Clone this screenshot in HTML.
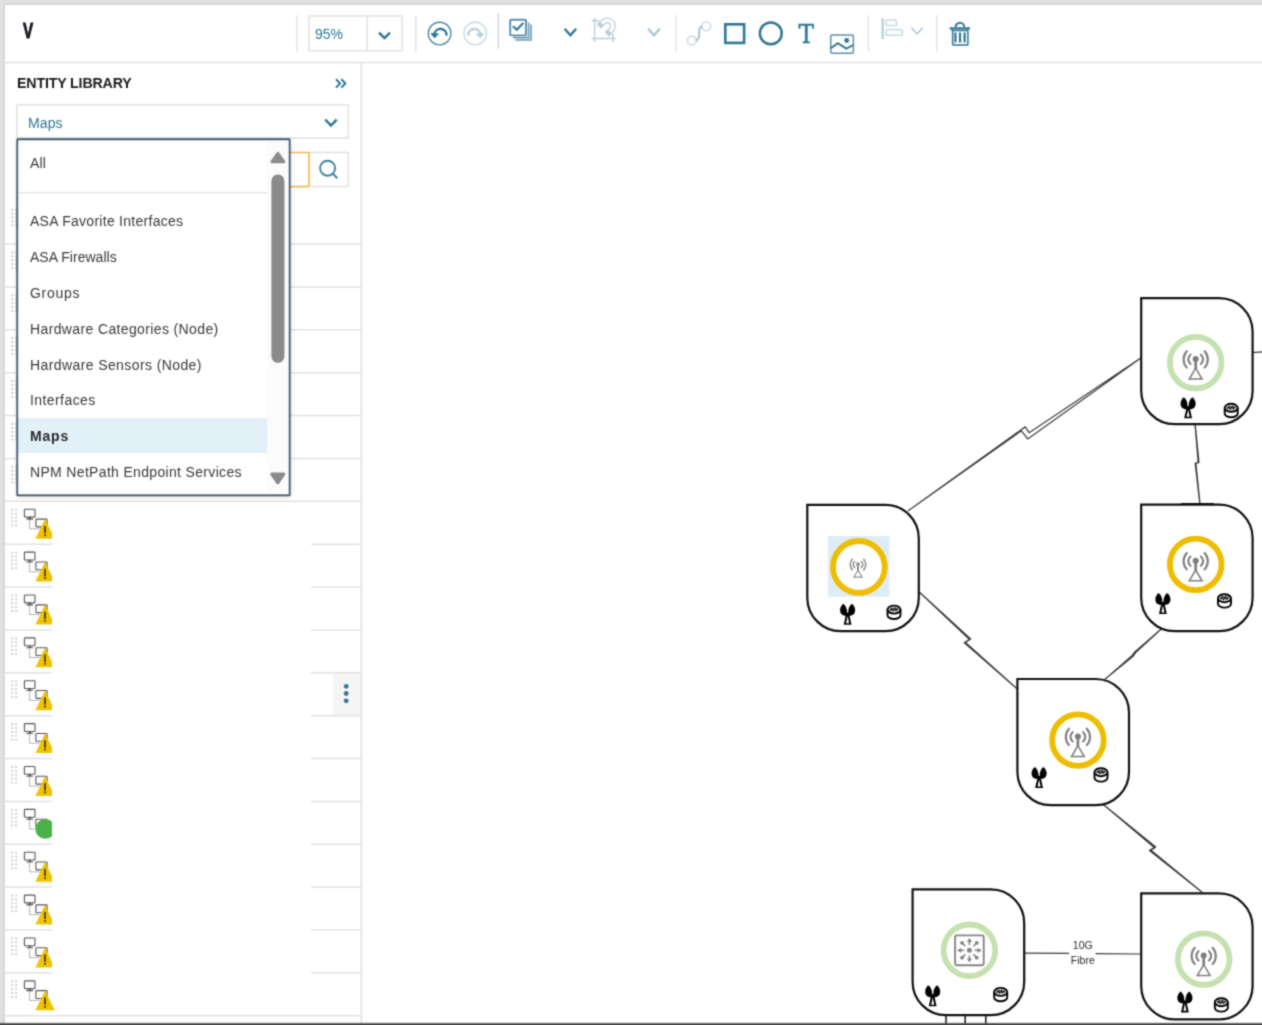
<!DOCTYPE html>
<html lang="en"><head><meta charset="utf-8"><title>Map editor</title>
<style>
*{box-sizing:border-box;margin:0;padding:0}
html,body{width:1262px;height:1025px;overflow:hidden;background:#fff}
body{filter:url(#soft);font-family:"Liberation Sans",sans-serif;font-size:14px;color:#333;position:relative}
.abs{position:absolute}
#frame-top{left:0;top:0;width:1262px;height:5px;background:#dfe0e0}
#frame-top i{position:absolute;left:4px;right:0;top:3px;height:1.5px;background:#d7d8d9}
#frame-left{left:0;top:0;width:5px;height:1025px;background:#dfe0e0}
#frame-left i{position:absolute;top:4px;bottom:0;left:2.5px;width:2px;background:#d7d8d9}
#frame-bottom{left:0;top:1022px;width:1262px;height:3px;background:linear-gradient(to bottom,rgba(80,80,80,0) 0%,rgba(80,80,80,.35) 35%,#4a4a4a 58%,#3c3c3c 100%)}
#toolbar{left:5px;top:5px;width:1257px;height:57px;background:#fff}
#title{left:22.5px;top:18.7px;font-weight:bold;font-size:22.4px;line-height:24px;color:#15151c;-webkit-text-stroke:.9px #15151c;transform:scaleX(.68);transform-origin:0 0}
#zoomval{left:315px;top:24.8px;font-size:14px;line-height:19px;color:#2f7796}
#panel{left:5px;top:63px;width:356px;height:961px;background:#fff}
#ptitle{left:17px;top:74px;font-weight:bold;font-size:14.2px;line-height:18px;color:#1c1c1c;letter-spacing:-.15px}
#selval{left:28px;top:113.6px;font-size:14px;line-height:19px;color:#2f7796;letter-spacing:.1px}
#mask{left:52px;top:503px;width:258.5px;height:500px;background:#fff}
#dd{left:18px;top:139.5px;width:271px;height:354.6px;background:#fff;box-shadow:0 1px 5px 1.5px rgba(0,0,0,.2)}
#dd .it{position:absolute;left:0;width:249px;height:35.5px;padding-left:12px;line-height:35.5px;font-size:14px;color:#3a3a3a;white-space:nowrap}
#dd .sel{background:#e2f0f7;font-weight:bold;color:#2a2a2a;height:35.2px;line-height:36px}
#dd .track{position:absolute;left:249px;top:0;width:22px;height:352px;background:#fbfbfb}

#menu{left:333px;top:673px;width:28px;height:43px;background:#f5f5f5}
</style></head>
<body>
<svg width="0" height="0" style="position:absolute"><filter id="soft" x="0" y="0" width="100%" height="100%" color-interpolation-filters="sRGB"><feConvolveMatrix order="3" kernelMatrix="0.035 0.115 0.035 0.115 0.4 0.115 0.035 0.115 0.035" divisor="1" edgeMode="duplicate" preserveAlpha="true"/></filter></svg>
<div id="toolbar" class="abs"></div>
<div id="title" class="abs">V</div>

<div id="zoomval" class="abs">95%</div>
<div id="panel" class="abs"></div>
<div id="ptitle" class="abs">ENTITY LIBRARY</div>
<div id="selval" class="abs">Maps</div>
<div id="menu" class="abs"></div>
<svg class="abs" style="left:0;top:0" width="1262" height="1025" viewBox="0 0 1262 1025"><g id="lines" fill="none"><path d="M5 62.6 H1262" stroke="#e1e1e1" stroke-width="1.5"/><path d="M361.4 63 V1024" stroke="#e1e1e1" stroke-width="1.6"/><path d="M297 15.2 V51.8" stroke="#e4e4e4" stroke-width="1.5"/><path d="M415.8 15.2 V51.8" stroke="#e4e4e4" stroke-width="1.5"/><path d="M498.4 13 V48.8" stroke="#d6d6d6" stroke-width="1.5"/><path d="M676 15.2 V51.8" stroke="#e4e4e4" stroke-width="1.5"/><path d="M868.5 15.2 V51.8" stroke="#e4e4e4" stroke-width="1.5"/><path d="M936.7 15.2 V51.8" stroke="#e4e4e4" stroke-width="1.5"/><rect x="309" y="16.1" width="93.2" height="34.7" rx=".8" fill="none" stroke="#e1e1e1" stroke-width="1.5"/><path d="M367.2 16.1 V50.8" stroke="#e1e1e1" stroke-width="1.5"/><rect x="16.9" y="104.8" width="331.5" height="33.3" rx=".8" fill="none" stroke="#e1e1e1" stroke-width="1.5"/><rect x="309" y="152.5" width="39.4" height="34.1" rx="1" fill="none" stroke="#e1e1e1" stroke-width="1.5"/><rect x="19.5" y="152.5" width="289.5" height="34.1" rx="1" fill="#fff" stroke="#f5b842" stroke-width="1.6"/><path d="M5 244.07 H361" stroke="#e2e2e2" stroke-width="1.5"/><path d="M5 286.94 H361" stroke="#e2e2e2" stroke-width="1.5"/><path d="M5 329.81 H361" stroke="#e2e2e2" stroke-width="1.5"/><path d="M5 372.68 H361" stroke="#e2e2e2" stroke-width="1.5"/><path d="M5 415.55 H361" stroke="#e2e2e2" stroke-width="1.5"/><path d="M5 458.42 H361" stroke="#e2e2e2" stroke-width="1.5"/><path d="M5 501.29 H361" stroke="#e2e2e2" stroke-width="1.5"/><path d="M5 544.16 H361" stroke="#e2e2e2" stroke-width="1.5"/><path d="M5 587.03 H361" stroke="#e2e2e2" stroke-width="1.5"/><path d="M5 629.90 H361" stroke="#e2e2e2" stroke-width="1.5"/><path d="M5 672.77 H361" stroke="#e2e2e2" stroke-width="1.5"/><path d="M5 715.64 H361" stroke="#e2e2e2" stroke-width="1.5"/><path d="M5 758.51 H361" stroke="#e2e2e2" stroke-width="1.5"/><path d="M5 801.38 H361" stroke="#e2e2e2" stroke-width="1.5"/><path d="M5 844.25 H361" stroke="#e2e2e2" stroke-width="1.5"/><path d="M5 887.12 H361" stroke="#e2e2e2" stroke-width="1.5"/><path d="M5 929.99 H361" stroke="#e2e2e2" stroke-width="1.5"/><path d="M5 972.86 H361" stroke="#e2e2e2" stroke-width="1.5"/><path d="M5 1015.73 H361" stroke="#e2e2e2" stroke-width="1.5"/></g></svg>
<svg class="abs" style="left:0;top:0" width="1262" height="1025" viewBox="0 0 1262 1025">
<g id="rowicons"><g transform="translate(0 208.60)"><rect x="11.3" y="0.2" width="1.7" height="1.7" fill="#c2c2c2"/><rect x="15.2" y="0.2" width="1.7" height="1.7" fill="#c2c2c2"/><rect x="11.3" y="4.1" width="1.7" height="1.7" fill="#c2c2c2"/><rect x="15.2" y="4.1" width="1.7" height="1.7" fill="#c2c2c2"/><rect x="11.3" y="8.0" width="1.7" height="1.7" fill="#c2c2c2"/><rect x="15.2" y="8.0" width="1.7" height="1.7" fill="#c2c2c2"/><rect x="11.3" y="11.9" width="1.7" height="1.7" fill="#c2c2c2"/><rect x="15.2" y="11.9" width="1.7" height="1.7" fill="#c2c2c2"/><rect x="11.3" y="15.8" width="1.7" height="1.7" fill="#c2c2c2"/><rect x="15.2" y="15.8" width="1.7" height="1.7" fill="#c2c2c2"/><g fill="none" stroke="#555" stroke-width="1.1"><rect x="24.4" y="0.6" width="10.6" height="7.8" rx=".8" fill="#fff"/><path d="M26.4 10.4 H33 M28.6 10.2 L29.7 8.6 L30.8 10.2"/><path d="M29.6 12 V20.2 H40" stroke-dasharray="1.1 1.2" stroke-width="1" stroke="#666" stroke-linejoin="miter"/><rect x="35.9" y="10.4" width="11.2" height="7.8" rx=".8" fill="#fff"/></g></g><g transform="translate(0 251.47)"><rect x="11.3" y="0.2" width="1.7" height="1.7" fill="#c2c2c2"/><rect x="15.2" y="0.2" width="1.7" height="1.7" fill="#c2c2c2"/><rect x="11.3" y="4.1" width="1.7" height="1.7" fill="#c2c2c2"/><rect x="15.2" y="4.1" width="1.7" height="1.7" fill="#c2c2c2"/><rect x="11.3" y="8.0" width="1.7" height="1.7" fill="#c2c2c2"/><rect x="15.2" y="8.0" width="1.7" height="1.7" fill="#c2c2c2"/><rect x="11.3" y="11.9" width="1.7" height="1.7" fill="#c2c2c2"/><rect x="15.2" y="11.9" width="1.7" height="1.7" fill="#c2c2c2"/><rect x="11.3" y="15.8" width="1.7" height="1.7" fill="#c2c2c2"/><rect x="15.2" y="15.8" width="1.7" height="1.7" fill="#c2c2c2"/><g fill="none" stroke="#555" stroke-width="1.1"><rect x="24.4" y="0.6" width="10.6" height="7.8" rx=".8" fill="#fff"/><path d="M26.4 10.4 H33 M28.6 10.2 L29.7 8.6 L30.8 10.2"/><path d="M29.6 12 V20.2 H40" stroke-dasharray="1.1 1.2" stroke-width="1" stroke="#666" stroke-linejoin="miter"/><rect x="35.9" y="10.4" width="11.2" height="7.8" rx=".8" fill="#fff"/></g></g><g transform="translate(0 294.34)"><rect x="11.3" y="0.2" width="1.7" height="1.7" fill="#c2c2c2"/><rect x="15.2" y="0.2" width="1.7" height="1.7" fill="#c2c2c2"/><rect x="11.3" y="4.1" width="1.7" height="1.7" fill="#c2c2c2"/><rect x="15.2" y="4.1" width="1.7" height="1.7" fill="#c2c2c2"/><rect x="11.3" y="8.0" width="1.7" height="1.7" fill="#c2c2c2"/><rect x="15.2" y="8.0" width="1.7" height="1.7" fill="#c2c2c2"/><rect x="11.3" y="11.9" width="1.7" height="1.7" fill="#c2c2c2"/><rect x="15.2" y="11.9" width="1.7" height="1.7" fill="#c2c2c2"/><rect x="11.3" y="15.8" width="1.7" height="1.7" fill="#c2c2c2"/><rect x="15.2" y="15.8" width="1.7" height="1.7" fill="#c2c2c2"/><g fill="none" stroke="#555" stroke-width="1.1"><rect x="24.4" y="0.6" width="10.6" height="7.8" rx=".8" fill="#fff"/><path d="M26.4 10.4 H33 M28.6 10.2 L29.7 8.6 L30.8 10.2"/><path d="M29.6 12 V20.2 H40" stroke-dasharray="1.1 1.2" stroke-width="1" stroke="#666" stroke-linejoin="miter"/><rect x="35.9" y="10.4" width="11.2" height="7.8" rx=".8" fill="#fff"/></g></g><g transform="translate(0 337.21)"><rect x="11.3" y="0.2" width="1.7" height="1.7" fill="#c2c2c2"/><rect x="15.2" y="0.2" width="1.7" height="1.7" fill="#c2c2c2"/><rect x="11.3" y="4.1" width="1.7" height="1.7" fill="#c2c2c2"/><rect x="15.2" y="4.1" width="1.7" height="1.7" fill="#c2c2c2"/><rect x="11.3" y="8.0" width="1.7" height="1.7" fill="#c2c2c2"/><rect x="15.2" y="8.0" width="1.7" height="1.7" fill="#c2c2c2"/><rect x="11.3" y="11.9" width="1.7" height="1.7" fill="#c2c2c2"/><rect x="15.2" y="11.9" width="1.7" height="1.7" fill="#c2c2c2"/><rect x="11.3" y="15.8" width="1.7" height="1.7" fill="#c2c2c2"/><rect x="15.2" y="15.8" width="1.7" height="1.7" fill="#c2c2c2"/><g fill="none" stroke="#555" stroke-width="1.1"><rect x="24.4" y="0.6" width="10.6" height="7.8" rx=".8" fill="#fff"/><path d="M26.4 10.4 H33 M28.6 10.2 L29.7 8.6 L30.8 10.2"/><path d="M29.6 12 V20.2 H40" stroke-dasharray="1.1 1.2" stroke-width="1" stroke="#666" stroke-linejoin="miter"/><rect x="35.9" y="10.4" width="11.2" height="7.8" rx=".8" fill="#fff"/></g></g><g transform="translate(0 380.08)"><rect x="11.3" y="0.2" width="1.7" height="1.7" fill="#c2c2c2"/><rect x="15.2" y="0.2" width="1.7" height="1.7" fill="#c2c2c2"/><rect x="11.3" y="4.1" width="1.7" height="1.7" fill="#c2c2c2"/><rect x="15.2" y="4.1" width="1.7" height="1.7" fill="#c2c2c2"/><rect x="11.3" y="8.0" width="1.7" height="1.7" fill="#c2c2c2"/><rect x="15.2" y="8.0" width="1.7" height="1.7" fill="#c2c2c2"/><rect x="11.3" y="11.9" width="1.7" height="1.7" fill="#c2c2c2"/><rect x="15.2" y="11.9" width="1.7" height="1.7" fill="#c2c2c2"/><rect x="11.3" y="15.8" width="1.7" height="1.7" fill="#c2c2c2"/><rect x="15.2" y="15.8" width="1.7" height="1.7" fill="#c2c2c2"/><g fill="none" stroke="#555" stroke-width="1.1"><rect x="24.4" y="0.6" width="10.6" height="7.8" rx=".8" fill="#fff"/><path d="M26.4 10.4 H33 M28.6 10.2 L29.7 8.6 L30.8 10.2"/><path d="M29.6 12 V20.2 H40" stroke-dasharray="1.1 1.2" stroke-width="1" stroke="#666" stroke-linejoin="miter"/><rect x="35.9" y="10.4" width="11.2" height="7.8" rx=".8" fill="#fff"/></g></g><g transform="translate(0 422.95)"><rect x="11.3" y="0.2" width="1.7" height="1.7" fill="#c2c2c2"/><rect x="15.2" y="0.2" width="1.7" height="1.7" fill="#c2c2c2"/><rect x="11.3" y="4.1" width="1.7" height="1.7" fill="#c2c2c2"/><rect x="15.2" y="4.1" width="1.7" height="1.7" fill="#c2c2c2"/><rect x="11.3" y="8.0" width="1.7" height="1.7" fill="#c2c2c2"/><rect x="15.2" y="8.0" width="1.7" height="1.7" fill="#c2c2c2"/><rect x="11.3" y="11.9" width="1.7" height="1.7" fill="#c2c2c2"/><rect x="15.2" y="11.9" width="1.7" height="1.7" fill="#c2c2c2"/><rect x="11.3" y="15.8" width="1.7" height="1.7" fill="#c2c2c2"/><rect x="15.2" y="15.8" width="1.7" height="1.7" fill="#c2c2c2"/><g fill="none" stroke="#555" stroke-width="1.1"><rect x="24.4" y="0.6" width="10.6" height="7.8" rx=".8" fill="#fff"/><path d="M26.4 10.4 H33 M28.6 10.2 L29.7 8.6 L30.8 10.2"/><path d="M29.6 12 V20.2 H40" stroke-dasharray="1.1 1.2" stroke-width="1" stroke="#666" stroke-linejoin="miter"/><rect x="35.9" y="10.4" width="11.2" height="7.8" rx=".8" fill="#fff"/></g></g><g transform="translate(0 465.82)"><rect x="11.3" y="0.2" width="1.7" height="1.7" fill="#c2c2c2"/><rect x="15.2" y="0.2" width="1.7" height="1.7" fill="#c2c2c2"/><rect x="11.3" y="4.1" width="1.7" height="1.7" fill="#c2c2c2"/><rect x="15.2" y="4.1" width="1.7" height="1.7" fill="#c2c2c2"/><rect x="11.3" y="8.0" width="1.7" height="1.7" fill="#c2c2c2"/><rect x="15.2" y="8.0" width="1.7" height="1.7" fill="#c2c2c2"/><rect x="11.3" y="11.9" width="1.7" height="1.7" fill="#c2c2c2"/><rect x="15.2" y="11.9" width="1.7" height="1.7" fill="#c2c2c2"/><rect x="11.3" y="15.8" width="1.7" height="1.7" fill="#c2c2c2"/><rect x="15.2" y="15.8" width="1.7" height="1.7" fill="#c2c2c2"/><g fill="none" stroke="#555" stroke-width="1.1"><rect x="24.4" y="0.6" width="10.6" height="7.8" rx=".8" fill="#fff"/><path d="M26.4 10.4 H33 M28.6 10.2 L29.7 8.6 L30.8 10.2"/><path d="M29.6 12 V20.2 H40" stroke-dasharray="1.1 1.2" stroke-width="1" stroke="#666" stroke-linejoin="miter"/><rect x="35.9" y="10.4" width="11.2" height="7.8" rx=".8" fill="#fff"/></g></g><g transform="translate(0 508.69)"><rect x="11.3" y="0.2" width="1.7" height="1.7" fill="#c2c2c2"/><rect x="15.2" y="0.2" width="1.7" height="1.7" fill="#c2c2c2"/><rect x="11.3" y="4.1" width="1.7" height="1.7" fill="#c2c2c2"/><rect x="15.2" y="4.1" width="1.7" height="1.7" fill="#c2c2c2"/><rect x="11.3" y="8.0" width="1.7" height="1.7" fill="#c2c2c2"/><rect x="15.2" y="8.0" width="1.7" height="1.7" fill="#c2c2c2"/><rect x="11.3" y="11.9" width="1.7" height="1.7" fill="#c2c2c2"/><rect x="15.2" y="11.9" width="1.7" height="1.7" fill="#c2c2c2"/><rect x="11.3" y="15.8" width="1.7" height="1.7" fill="#c2c2c2"/><rect x="15.2" y="15.8" width="1.7" height="1.7" fill="#c2c2c2"/><g fill="none" stroke="#555" stroke-width="1.1"><rect x="24.4" y="0.6" width="10.6" height="7.8" rx=".8" fill="#fff"/><path d="M26.4 10.4 H33 M28.6 10.2 L29.7 8.6 L30.8 10.2"/><path d="M29.6 12 V20.2 H40" stroke-dasharray="1.1 1.2" stroke-width="1" stroke="#666" stroke-linejoin="miter"/><rect x="35.9" y="10.4" width="11.2" height="7.8" rx=".8" fill="#fff"/></g><path d="M45 10.4 L54.8 30 H35.4 Z" fill="#f0c200"/><path d="M45 17.2 V24.6" stroke="#5a4d14" stroke-width="2" fill="none"/><rect x="44" y="25.6" width="2" height="1.8" fill="#5a4d14"/></g><g transform="translate(0 551.56)"><rect x="11.3" y="0.2" width="1.7" height="1.7" fill="#c2c2c2"/><rect x="15.2" y="0.2" width="1.7" height="1.7" fill="#c2c2c2"/><rect x="11.3" y="4.1" width="1.7" height="1.7" fill="#c2c2c2"/><rect x="15.2" y="4.1" width="1.7" height="1.7" fill="#c2c2c2"/><rect x="11.3" y="8.0" width="1.7" height="1.7" fill="#c2c2c2"/><rect x="15.2" y="8.0" width="1.7" height="1.7" fill="#c2c2c2"/><rect x="11.3" y="11.9" width="1.7" height="1.7" fill="#c2c2c2"/><rect x="15.2" y="11.9" width="1.7" height="1.7" fill="#c2c2c2"/><rect x="11.3" y="15.8" width="1.7" height="1.7" fill="#c2c2c2"/><rect x="15.2" y="15.8" width="1.7" height="1.7" fill="#c2c2c2"/><g fill="none" stroke="#555" stroke-width="1.1"><rect x="24.4" y="0.6" width="10.6" height="7.8" rx=".8" fill="#fff"/><path d="M26.4 10.4 H33 M28.6 10.2 L29.7 8.6 L30.8 10.2"/><path d="M29.6 12 V20.2 H40" stroke-dasharray="1.1 1.2" stroke-width="1" stroke="#666" stroke-linejoin="miter"/><rect x="35.9" y="10.4" width="11.2" height="7.8" rx=".8" fill="#fff"/></g><path d="M45 10.4 L54.8 30 H35.4 Z" fill="#f0c200"/><path d="M45 17.2 V24.6" stroke="#5a4d14" stroke-width="2" fill="none"/><rect x="44" y="25.6" width="2" height="1.8" fill="#5a4d14"/></g><g transform="translate(0 594.43)"><rect x="11.3" y="0.2" width="1.7" height="1.7" fill="#c2c2c2"/><rect x="15.2" y="0.2" width="1.7" height="1.7" fill="#c2c2c2"/><rect x="11.3" y="4.1" width="1.7" height="1.7" fill="#c2c2c2"/><rect x="15.2" y="4.1" width="1.7" height="1.7" fill="#c2c2c2"/><rect x="11.3" y="8.0" width="1.7" height="1.7" fill="#c2c2c2"/><rect x="15.2" y="8.0" width="1.7" height="1.7" fill="#c2c2c2"/><rect x="11.3" y="11.9" width="1.7" height="1.7" fill="#c2c2c2"/><rect x="15.2" y="11.9" width="1.7" height="1.7" fill="#c2c2c2"/><rect x="11.3" y="15.8" width="1.7" height="1.7" fill="#c2c2c2"/><rect x="15.2" y="15.8" width="1.7" height="1.7" fill="#c2c2c2"/><g fill="none" stroke="#555" stroke-width="1.1"><rect x="24.4" y="0.6" width="10.6" height="7.8" rx=".8" fill="#fff"/><path d="M26.4 10.4 H33 M28.6 10.2 L29.7 8.6 L30.8 10.2"/><path d="M29.6 12 V20.2 H40" stroke-dasharray="1.1 1.2" stroke-width="1" stroke="#666" stroke-linejoin="miter"/><rect x="35.9" y="10.4" width="11.2" height="7.8" rx=".8" fill="#fff"/></g><path d="M45 10.4 L54.8 30 H35.4 Z" fill="#f0c200"/><path d="M45 17.2 V24.6" stroke="#5a4d14" stroke-width="2" fill="none"/><rect x="44" y="25.6" width="2" height="1.8" fill="#5a4d14"/></g><g transform="translate(0 637.30)"><rect x="11.3" y="0.2" width="1.7" height="1.7" fill="#c2c2c2"/><rect x="15.2" y="0.2" width="1.7" height="1.7" fill="#c2c2c2"/><rect x="11.3" y="4.1" width="1.7" height="1.7" fill="#c2c2c2"/><rect x="15.2" y="4.1" width="1.7" height="1.7" fill="#c2c2c2"/><rect x="11.3" y="8.0" width="1.7" height="1.7" fill="#c2c2c2"/><rect x="15.2" y="8.0" width="1.7" height="1.7" fill="#c2c2c2"/><rect x="11.3" y="11.9" width="1.7" height="1.7" fill="#c2c2c2"/><rect x="15.2" y="11.9" width="1.7" height="1.7" fill="#c2c2c2"/><rect x="11.3" y="15.8" width="1.7" height="1.7" fill="#c2c2c2"/><rect x="15.2" y="15.8" width="1.7" height="1.7" fill="#c2c2c2"/><g fill="none" stroke="#555" stroke-width="1.1"><rect x="24.4" y="0.6" width="10.6" height="7.8" rx=".8" fill="#fff"/><path d="M26.4 10.4 H33 M28.6 10.2 L29.7 8.6 L30.8 10.2"/><path d="M29.6 12 V20.2 H40" stroke-dasharray="1.1 1.2" stroke-width="1" stroke="#666" stroke-linejoin="miter"/><rect x="35.9" y="10.4" width="11.2" height="7.8" rx=".8" fill="#fff"/></g><path d="M45 10.4 L54.8 30 H35.4 Z" fill="#f0c200"/><path d="M45 17.2 V24.6" stroke="#5a4d14" stroke-width="2" fill="none"/><rect x="44" y="25.6" width="2" height="1.8" fill="#5a4d14"/></g><g transform="translate(0 680.17)"><rect x="11.3" y="0.2" width="1.7" height="1.7" fill="#c2c2c2"/><rect x="15.2" y="0.2" width="1.7" height="1.7" fill="#c2c2c2"/><rect x="11.3" y="4.1" width="1.7" height="1.7" fill="#c2c2c2"/><rect x="15.2" y="4.1" width="1.7" height="1.7" fill="#c2c2c2"/><rect x="11.3" y="8.0" width="1.7" height="1.7" fill="#c2c2c2"/><rect x="15.2" y="8.0" width="1.7" height="1.7" fill="#c2c2c2"/><rect x="11.3" y="11.9" width="1.7" height="1.7" fill="#c2c2c2"/><rect x="15.2" y="11.9" width="1.7" height="1.7" fill="#c2c2c2"/><rect x="11.3" y="15.8" width="1.7" height="1.7" fill="#c2c2c2"/><rect x="15.2" y="15.8" width="1.7" height="1.7" fill="#c2c2c2"/><g fill="none" stroke="#555" stroke-width="1.1"><rect x="24.4" y="0.6" width="10.6" height="7.8" rx=".8" fill="#fff"/><path d="M26.4 10.4 H33 M28.6 10.2 L29.7 8.6 L30.8 10.2"/><path d="M29.6 12 V20.2 H40" stroke-dasharray="1.1 1.2" stroke-width="1" stroke="#666" stroke-linejoin="miter"/><rect x="35.9" y="10.4" width="11.2" height="7.8" rx=".8" fill="#fff"/></g><path d="M45 10.4 L54.8 30 H35.4 Z" fill="#f0c200"/><path d="M45 17.2 V24.6" stroke="#5a4d14" stroke-width="2" fill="none"/><rect x="44" y="25.6" width="2" height="1.8" fill="#5a4d14"/></g><g transform="translate(0 723.04)"><rect x="11.3" y="0.2" width="1.7" height="1.7" fill="#c2c2c2"/><rect x="15.2" y="0.2" width="1.7" height="1.7" fill="#c2c2c2"/><rect x="11.3" y="4.1" width="1.7" height="1.7" fill="#c2c2c2"/><rect x="15.2" y="4.1" width="1.7" height="1.7" fill="#c2c2c2"/><rect x="11.3" y="8.0" width="1.7" height="1.7" fill="#c2c2c2"/><rect x="15.2" y="8.0" width="1.7" height="1.7" fill="#c2c2c2"/><rect x="11.3" y="11.9" width="1.7" height="1.7" fill="#c2c2c2"/><rect x="15.2" y="11.9" width="1.7" height="1.7" fill="#c2c2c2"/><rect x="11.3" y="15.8" width="1.7" height="1.7" fill="#c2c2c2"/><rect x="15.2" y="15.8" width="1.7" height="1.7" fill="#c2c2c2"/><g fill="none" stroke="#555" stroke-width="1.1"><rect x="24.4" y="0.6" width="10.6" height="7.8" rx=".8" fill="#fff"/><path d="M26.4 10.4 H33 M28.6 10.2 L29.7 8.6 L30.8 10.2"/><path d="M29.6 12 V20.2 H40" stroke-dasharray="1.1 1.2" stroke-width="1" stroke="#666" stroke-linejoin="miter"/><rect x="35.9" y="10.4" width="11.2" height="7.8" rx=".8" fill="#fff"/></g><path d="M45 10.4 L54.8 30 H35.4 Z" fill="#f0c200"/><path d="M45 17.2 V24.6" stroke="#5a4d14" stroke-width="2" fill="none"/><rect x="44" y="25.6" width="2" height="1.8" fill="#5a4d14"/></g><g transform="translate(0 765.91)"><rect x="11.3" y="0.2" width="1.7" height="1.7" fill="#c2c2c2"/><rect x="15.2" y="0.2" width="1.7" height="1.7" fill="#c2c2c2"/><rect x="11.3" y="4.1" width="1.7" height="1.7" fill="#c2c2c2"/><rect x="15.2" y="4.1" width="1.7" height="1.7" fill="#c2c2c2"/><rect x="11.3" y="8.0" width="1.7" height="1.7" fill="#c2c2c2"/><rect x="15.2" y="8.0" width="1.7" height="1.7" fill="#c2c2c2"/><rect x="11.3" y="11.9" width="1.7" height="1.7" fill="#c2c2c2"/><rect x="15.2" y="11.9" width="1.7" height="1.7" fill="#c2c2c2"/><rect x="11.3" y="15.8" width="1.7" height="1.7" fill="#c2c2c2"/><rect x="15.2" y="15.8" width="1.7" height="1.7" fill="#c2c2c2"/><g fill="none" stroke="#555" stroke-width="1.1"><rect x="24.4" y="0.6" width="10.6" height="7.8" rx=".8" fill="#fff"/><path d="M26.4 10.4 H33 M28.6 10.2 L29.7 8.6 L30.8 10.2"/><path d="M29.6 12 V20.2 H40" stroke-dasharray="1.1 1.2" stroke-width="1" stroke="#666" stroke-linejoin="miter"/><rect x="35.9" y="10.4" width="11.2" height="7.8" rx=".8" fill="#fff"/></g><path d="M45 10.4 L54.8 30 H35.4 Z" fill="#f0c200"/><path d="M45 17.2 V24.6" stroke="#5a4d14" stroke-width="2" fill="none"/><rect x="44" y="25.6" width="2" height="1.8" fill="#5a4d14"/></g><g transform="translate(0 808.78)"><rect x="11.3" y="0.2" width="1.7" height="1.7" fill="#c2c2c2"/><rect x="15.2" y="0.2" width="1.7" height="1.7" fill="#c2c2c2"/><rect x="11.3" y="4.1" width="1.7" height="1.7" fill="#c2c2c2"/><rect x="15.2" y="4.1" width="1.7" height="1.7" fill="#c2c2c2"/><rect x="11.3" y="8.0" width="1.7" height="1.7" fill="#c2c2c2"/><rect x="15.2" y="8.0" width="1.7" height="1.7" fill="#c2c2c2"/><rect x="11.3" y="11.9" width="1.7" height="1.7" fill="#c2c2c2"/><rect x="15.2" y="11.9" width="1.7" height="1.7" fill="#c2c2c2"/><rect x="11.3" y="15.8" width="1.7" height="1.7" fill="#c2c2c2"/><rect x="15.2" y="15.8" width="1.7" height="1.7" fill="#c2c2c2"/><g fill="none" stroke="#555" stroke-width="1.1"><rect x="24.4" y="0.6" width="10.6" height="7.8" rx=".8" fill="#fff"/><path d="M26.4 10.4 H33 M28.6 10.2 L29.7 8.6 L30.8 10.2"/><path d="M29.6 12 V20.2 H40" stroke-dasharray="1.1 1.2" stroke-width="1" stroke="#666" stroke-linejoin="miter"/><rect x="35.9" y="10.4" width="11.2" height="7.8" rx=".8" fill="#fff"/></g><circle cx="45.3" cy="20.1" r="9.9" fill="#4bb048"/></g><g transform="translate(0 851.65)"><rect x="11.3" y="0.2" width="1.7" height="1.7" fill="#c2c2c2"/><rect x="15.2" y="0.2" width="1.7" height="1.7" fill="#c2c2c2"/><rect x="11.3" y="4.1" width="1.7" height="1.7" fill="#c2c2c2"/><rect x="15.2" y="4.1" width="1.7" height="1.7" fill="#c2c2c2"/><rect x="11.3" y="8.0" width="1.7" height="1.7" fill="#c2c2c2"/><rect x="15.2" y="8.0" width="1.7" height="1.7" fill="#c2c2c2"/><rect x="11.3" y="11.9" width="1.7" height="1.7" fill="#c2c2c2"/><rect x="15.2" y="11.9" width="1.7" height="1.7" fill="#c2c2c2"/><rect x="11.3" y="15.8" width="1.7" height="1.7" fill="#c2c2c2"/><rect x="15.2" y="15.8" width="1.7" height="1.7" fill="#c2c2c2"/><g fill="none" stroke="#555" stroke-width="1.1"><rect x="24.4" y="0.6" width="10.6" height="7.8" rx=".8" fill="#fff"/><path d="M26.4 10.4 H33 M28.6 10.2 L29.7 8.6 L30.8 10.2"/><path d="M29.6 12 V20.2 H40" stroke-dasharray="1.1 1.2" stroke-width="1" stroke="#666" stroke-linejoin="miter"/><rect x="35.9" y="10.4" width="11.2" height="7.8" rx=".8" fill="#fff"/></g><path d="M45 10.4 L54.8 30 H35.4 Z" fill="#f0c200"/><path d="M45 17.2 V24.6" stroke="#5a4d14" stroke-width="2" fill="none"/><rect x="44" y="25.6" width="2" height="1.8" fill="#5a4d14"/></g><g transform="translate(0 894.52)"><rect x="11.3" y="0.2" width="1.7" height="1.7" fill="#c2c2c2"/><rect x="15.2" y="0.2" width="1.7" height="1.7" fill="#c2c2c2"/><rect x="11.3" y="4.1" width="1.7" height="1.7" fill="#c2c2c2"/><rect x="15.2" y="4.1" width="1.7" height="1.7" fill="#c2c2c2"/><rect x="11.3" y="8.0" width="1.7" height="1.7" fill="#c2c2c2"/><rect x="15.2" y="8.0" width="1.7" height="1.7" fill="#c2c2c2"/><rect x="11.3" y="11.9" width="1.7" height="1.7" fill="#c2c2c2"/><rect x="15.2" y="11.9" width="1.7" height="1.7" fill="#c2c2c2"/><rect x="11.3" y="15.8" width="1.7" height="1.7" fill="#c2c2c2"/><rect x="15.2" y="15.8" width="1.7" height="1.7" fill="#c2c2c2"/><g fill="none" stroke="#555" stroke-width="1.1"><rect x="24.4" y="0.6" width="10.6" height="7.8" rx=".8" fill="#fff"/><path d="M26.4 10.4 H33 M28.6 10.2 L29.7 8.6 L30.8 10.2"/><path d="M29.6 12 V20.2 H40" stroke-dasharray="1.1 1.2" stroke-width="1" stroke="#666" stroke-linejoin="miter"/><rect x="35.9" y="10.4" width="11.2" height="7.8" rx=".8" fill="#fff"/></g><path d="M45 10.4 L54.8 30 H35.4 Z" fill="#f0c200"/><path d="M45 17.2 V24.6" stroke="#5a4d14" stroke-width="2" fill="none"/><rect x="44" y="25.6" width="2" height="1.8" fill="#5a4d14"/></g><g transform="translate(0 937.39)"><rect x="11.3" y="0.2" width="1.7" height="1.7" fill="#c2c2c2"/><rect x="15.2" y="0.2" width="1.7" height="1.7" fill="#c2c2c2"/><rect x="11.3" y="4.1" width="1.7" height="1.7" fill="#c2c2c2"/><rect x="15.2" y="4.1" width="1.7" height="1.7" fill="#c2c2c2"/><rect x="11.3" y="8.0" width="1.7" height="1.7" fill="#c2c2c2"/><rect x="15.2" y="8.0" width="1.7" height="1.7" fill="#c2c2c2"/><rect x="11.3" y="11.9" width="1.7" height="1.7" fill="#c2c2c2"/><rect x="15.2" y="11.9" width="1.7" height="1.7" fill="#c2c2c2"/><rect x="11.3" y="15.8" width="1.7" height="1.7" fill="#c2c2c2"/><rect x="15.2" y="15.8" width="1.7" height="1.7" fill="#c2c2c2"/><g fill="none" stroke="#555" stroke-width="1.1"><rect x="24.4" y="0.6" width="10.6" height="7.8" rx=".8" fill="#fff"/><path d="M26.4 10.4 H33 M28.6 10.2 L29.7 8.6 L30.8 10.2"/><path d="M29.6 12 V20.2 H40" stroke-dasharray="1.1 1.2" stroke-width="1" stroke="#666" stroke-linejoin="miter"/><rect x="35.9" y="10.4" width="11.2" height="7.8" rx=".8" fill="#fff"/></g><path d="M45 10.4 L54.8 30 H35.4 Z" fill="#f0c200"/><path d="M45 17.2 V24.6" stroke="#5a4d14" stroke-width="2" fill="none"/><rect x="44" y="25.6" width="2" height="1.8" fill="#5a4d14"/></g><g transform="translate(0 980.26)"><rect x="11.3" y="0.2" width="1.7" height="1.7" fill="#c2c2c2"/><rect x="15.2" y="0.2" width="1.7" height="1.7" fill="#c2c2c2"/><rect x="11.3" y="4.1" width="1.7" height="1.7" fill="#c2c2c2"/><rect x="15.2" y="4.1" width="1.7" height="1.7" fill="#c2c2c2"/><rect x="11.3" y="8.0" width="1.7" height="1.7" fill="#c2c2c2"/><rect x="15.2" y="8.0" width="1.7" height="1.7" fill="#c2c2c2"/><rect x="11.3" y="11.9" width="1.7" height="1.7" fill="#c2c2c2"/><rect x="15.2" y="11.9" width="1.7" height="1.7" fill="#c2c2c2"/><rect x="11.3" y="15.8" width="1.7" height="1.7" fill="#c2c2c2"/><rect x="15.2" y="15.8" width="1.7" height="1.7" fill="#c2c2c2"/><g fill="none" stroke="#555" stroke-width="1.1"><rect x="24.4" y="0.6" width="10.6" height="7.8" rx=".8" fill="#fff"/><path d="M26.4 10.4 H33 M28.6 10.2 L29.7 8.6 L30.8 10.2"/><path d="M29.6 12 V20.2 H40" stroke-dasharray="1.1 1.2" stroke-width="1" stroke="#666" stroke-linejoin="miter"/><rect x="35.9" y="10.4" width="11.2" height="7.8" rx=".8" fill="#fff"/></g><path d="M45 10.4 L54.8 30 H35.4 Z" fill="#f0c200"/><path d="M45 17.2 V24.6" stroke="#5a4d14" stroke-width="2" fill="none"/><rect x="44" y="25.6" width="2" height="1.8" fill="#5a4d14"/></g><g transform="translate(0 1023.13)"><rect x="11.3" y="0.2" width="1.7" height="1.7" fill="#c2c2c2"/><rect x="15.2" y="0.2" width="1.7" height="1.7" fill="#c2c2c2"/><rect x="11.3" y="4.1" width="1.7" height="1.7" fill="#c2c2c2"/><rect x="15.2" y="4.1" width="1.7" height="1.7" fill="#c2c2c2"/><rect x="11.3" y="8.0" width="1.7" height="1.7" fill="#c2c2c2"/><rect x="15.2" y="8.0" width="1.7" height="1.7" fill="#c2c2c2"/><rect x="11.3" y="11.9" width="1.7" height="1.7" fill="#c2c2c2"/><rect x="15.2" y="11.9" width="1.7" height="1.7" fill="#c2c2c2"/><rect x="11.3" y="15.8" width="1.7" height="1.7" fill="#c2c2c2"/><rect x="15.2" y="15.8" width="1.7" height="1.7" fill="#c2c2c2"/></g></g>
</svg>
<div id="mask" class="abs"></div>
<svg class="abs" style="left:0;top:0" width="1262" height="1025" viewBox="0 0 1262 1025">
<g id="tbicons"><path d="M379.00 32.55 L384.50 38.05 L390.00 32.55" fill="none" stroke="#2f7796" stroke-width="2.4" stroke-linecap="butt" stroke-linejoin="miter"/><circle cx="439.6" cy="33.5" r="11.3" fill="none" stroke="#2f7796" stroke-width="1.35" opacity=".9"/><path d="M446.5 35.6 A6.1 6.1 0 0 0 434.5 33.6" fill="none" stroke="#2f7796" stroke-width="2.4"/><path d="M431 33.4 L438.4 34 L434.5 37.8 Z" fill="#2f7796" stroke="#2f7796" stroke-width="1" stroke-linejoin="round"/><g opacity=".34"><circle cx="475.2" cy="33.5" r="11.3" fill="none" stroke="#2f7796" stroke-width="1.35" opacity=".8"/><path d="M468.3 35.6 A6.1 6.1 0 0 1 480.3 33.6" fill="none" stroke="#2f7796" stroke-width="2.4"/><path d="M483.8 33.4 L476.4 34 L480.3 37.8 Z" fill="#2f7796" stroke="#2f7796" stroke-width="1" stroke-linejoin="round"/></g><g fill="none" stroke="#6a9cb3" stroke-width="1.6"><path d="M515.5 40 H531 V24.5"/><path d="M513 37.6 H528.6 V22.5"/><rect x="510.2" y="19.8" width="15.8" height="15.6" rx="1" stroke="#5a91ab" stroke-width="1.9"/></g><path d="M513.5 26.8 L516.8 29.8 L522.8 23.6" fill="none" stroke="#2f7796" stroke-width="2.1" stroke-linecap="round"/><path d="M564.60 28.75 L570.40 35.25 L576.20 28.75" fill="none" stroke="#2f7796" stroke-width="2.4" stroke-linecap="butt" stroke-linejoin="miter"/><g opacity=".34" fill="none" stroke="#2f7796"><path d="M594.6 17.9 V42 M591.6 20.8 H599 M591.6 38.5 H615.6 M612.7 34.1 V42" stroke-width="1.4"/><g transform="translate(607.3 26) rotate(45)"><path d="M-7.9 5.6 V0 A7.9 7.9 0 0 1 7.9 0 V5.6 H3.3 V0 A3.3 3.3 0 0 0 -3.3 0 V5.6 Z" stroke-width="1.3"/><path d="M-7.9 2.6 H-3.3 V5.6 H-7.9Z M3.3 2.6 H7.9 V5.6 H3.3Z" fill="#2f7796" stroke-width="1"/></g></g><g opacity=".42"><path d="M648.20 28.75 L654.00 35.25 L659.80 28.75" fill="none" stroke="#2f7796" stroke-width="2.4" stroke-linecap="butt" stroke-linejoin="miter"/></g><g fill="none" stroke="#2f7796"><circle cx="691.8" cy="40.6" r="4.4" stroke-width="1.4" opacity=".27"/><circle cx="706.2" cy="26.3" r="4.4" stroke-width="1.4" opacity=".27"/><path d="M696 40.4 C699.6 38.6 699.2 36.5 699.2 34 V31 C699.2 28.4 699.4 27.4 702 26.6" stroke-width="2.2" opacity=".4"/></g><rect x="725.3" y="24.3" width="18.8" height="18.6" fill="none" stroke="#2f7796" stroke-width="2.6"/><circle cx="770.8" cy="33.4" r="10.9" fill="none" stroke="#2f7796" stroke-width="2.5"/><text x="806.3" y="43" text-anchor="middle" font-family="DejaVu Serif, Liberation Serif, serif" font-weight="normal" font-size="26.5" stroke="#2f7796" stroke-width=".5" fill="#2f7796" textLength="15.5" lengthAdjust="spacingAndGlyphs">T</text><g fill="none" stroke="#2f7796"><rect x="830.8" y="34.9" width="22.6" height="18.3" rx="1.5" stroke="#5a91ab" stroke-width="1.5"/><path d="M830.8 48.2 L837.8 43.2 L846.3 48.6 L853.4 45" stroke-width="1.9"/></g><circle cx="846.7" cy="40.5" r="2.4" fill="#2f7796"/><g fill="none" stroke="#2f7796"><path d="M882.6 18 V39" stroke-width="2" opacity=".4"/><rect x="886" y="20" width="10.4" height="5.6" rx=".8" stroke-width="1.5" opacity=".27"/><rect x="886" y="29.8" width="16.4" height="5.4" rx=".8" stroke-width="1.5" opacity=".27"/></g><g opacity=".4"><path d="M911.30 27.80 L917.00 33.80 L922.70 27.80" fill="none" stroke="#2f7796" stroke-width="1.6" stroke-linecap="butt" stroke-linejoin="miter"/></g><g fill="none" stroke="#2f7796"><path d="M955.6 27 A4.3 4.3 0 0 1 964.2 27" stroke-width="2"/><path d="M950.6 28.3 H969.2" stroke-width="2.2" stroke-linecap="round"/><path d="M951.2 28.5 L952.5 31" stroke-width="1.4"/><path d="M968.6 28.5 L967.3 31" stroke-width="1.4"/><rect x="952.6" y="30.6" width="15.3" height="14.4" rx=".8" stroke-width="1.5"/><path d="M955.4 32.6 V42.6 M960 32.6 V42.6 M964.6 32.6 V42.6" stroke-width="2.2"/></g><circle cx="346.2" cy="686.3" r="2.4" fill="#2f7796"/><circle cx="346.2" cy="693.5" r="2.4" fill="#2f7796"/><circle cx="346.2" cy="700.8" r="2.4" fill="#2f7796"/><path d="M336 79.2 L340 83.4 L336 87.6 M341.3 79.2 L345.3 83.4 L341.3 87.6" fill="none" stroke="#2f7796" stroke-width="2"/><path d="M325.30 119.60 L331.00 125.60 L336.70 119.60" fill="none" stroke="#2f7796" stroke-width="2.4" stroke-linecap="butt" stroke-linejoin="miter"/><circle cx="327.6" cy="168.2" r="7.5" fill="none" stroke="#3f7f9c" stroke-width="1.9"/><path d="M332.8 173.8 L337.4 178.3" stroke="#3f7f9c" stroke-width="1.9" fill="none"/></g>
<g id="map"><path d="M907.9 510.9 L1025.2 426.9 L1029.2 432.7 L1141.2 357.7 L1027.8 438.9 L1021.3 430.8 Z" fill="#fff" stroke="#3a3a3a" stroke-width="1.25" stroke-linejoin="miter"/><path d="M1195.1 424.4 L1198.9 462.4 L1195.8 463.0 L1199.9 503.6 L1195.3 463.4 L1198.3 462.6 Z" fill="#fff" stroke="#3a3a3a" stroke-width="1.35" stroke-linejoin="miter"/><path d="M1252.6 352.6 L1262 351.9" fill="none" stroke="#3a3a3a" stroke-width="1.2"/><path d="M919.0 591.7 L970.6 638.9 L965.2 642.2 L1017.0 688.8 L964.4 642.9 L969.6 639.6 Z" fill="#fff" stroke="#3a3a3a" stroke-width="1.25" stroke-linejoin="miter"/><path d="M1161.0 629.2 L1135.6 652.6 L1133.0 656.2 L1104.6 679.6 L1132.2 655.4 L1134.8 652.0 Z" fill="#fff" stroke="#3a3a3a" stroke-width="1.25" stroke-linejoin="miter"/><path d="M1103.6 804.8 L1155.6 846.9 L1150.4 849.8 L1202.4 892.6 L1149.6 850.6 L1154.6 847.8 Z" fill="#fff" stroke="#3a3a3a" stroke-width="1.25" stroke-linejoin="miter"/><path d="M1024.6 953.1 L1069 953.4 M1095.6 953.6 L1141 954" fill="none" stroke="#3a3a3a" stroke-width="1.2"/><path d="M946 1015 V1024 M965.2 1015 V1024 M985.8 1015 V1024" fill="none" stroke="#222" stroke-width="1.6"/><path d="M1141.2 298.2 H1219.1 A33.5 33.5 0 0 1 1252.6 331.7 V390.7 A33.5 33.5 0 0 1 1219.1 424.2 H1174.7 A33.5 33.5 0 0 1 1141.2 390.7 Z" fill="#fff" stroke="#111" stroke-width="2.2"/><circle cx="1195.7" cy="362.6" r="25.8" fill="#fff" stroke="#c5e1af" stroke-width="5.8"/><g transform="translate(1195.7 362.6) scale(1.0)" fill="none" stroke="#7e7e7e" stroke-linecap="round"><circle cx="0" cy="-3.6" r="3" fill="#7e7e7e" stroke="none"/><path d="M0 -3 V6.4" stroke-width="2.7" stroke-linecap="butt"/><path d="M0 5.6 L-6.4 16.4 H6.4 Z" stroke-width="1.5" stroke-linejoin="miter"/><path d="M-5.2 -7.9 A6 6 0 0 0 -5.2 1.4 M5.2 -7.9 A6 6 0 0 1 5.2 1.4" stroke-width="2.1"/><path d="M-8.9 -11.4 A12.1 12.1 0 0 0 -8.9 5 M8.9 -11.4 A12.1 12.1 0 0 1 8.9 5" stroke-width="2.1"/></g><g transform="translate(1180.4 397.3)"><path d="M3.4 0 C0.2 2.4 -0.8 7 1.2 10 C2.4 11.6 4.6 12.2 6.6 11.6 C7.6 8.6 7.4 3.4 3.4 0 Z" fill="#000"/><path d="M12 0 C15.2 2.4 16.2 7 14.2 10 C13 11.6 10.8 12.2 8.8 11.6 C7.8 8.6 8 3.4 12 0 Z" fill="#000"/><path d="M6.4 9 H9 L11.6 21 H3.8 Z" fill="#000"/><path d="M7.7 12.4 L9.2 19.4 H6.2 Z" fill="#fff"/></g><g transform="translate(1231.2 410.4)"><path d="M-6.5 -2.6 V3 A6.5 3.8 0 0 0 6.5 3 V-2.6" fill="#fff" stroke="#000" stroke-width="1.9"/><ellipse cx="0" cy="-2.6" rx="6.5" ry="4" fill="#e8e8e8" stroke="#000" stroke-width="1.9"/><path d="M-4.2 -2 L-1.2 -4.2 M1.2 -1.4 L4.2 -3.6 M-1.8 -1 L1.8 -4.6" stroke-width="1.8" stroke="#1a1a1a" fill="none"/></g><path d="M807.3 504.8 H885.3 A33.5 33.5 0 0 1 918.8 538.3 V597.7 A33.5 33.5 0 0 1 885.3 631.2 H840.8 A33.5 33.5 0 0 1 807.3 597.7 Z" fill="#fff" stroke="#111" stroke-width="2.2"/><rect x="827.8" y="536" width="61.7" height="60.8" fill="#deedf5"/><circle cx="858.85" cy="566.9" r="25.9" fill="#fff" stroke="#f0bc00" stroke-width="5.8"/><g transform="translate(858 566.6) scale(0.645)" fill="none" stroke="#909090" stroke-linecap="round"><circle cx="0" cy="-3.6" r="3" fill="#909090" stroke="none"/><path d="M0 -3 V6.4" stroke-width="3.105" stroke-linecap="butt"/><path d="M0 5.6 L-6.4 16.4 H6.4 Z" stroke-width="1.7249999999999999" stroke-linejoin="miter"/><path d="M-5.2 -7.9 A6 6 0 0 0 -5.2 1.4 M5.2 -7.9 A6 6 0 0 1 5.2 1.4" stroke-width="2.415"/><path d="M-8.9 -11.4 A12.1 12.1 0 0 0 -8.9 5 M8.9 -11.4 A12.1 12.1 0 0 1 8.9 5" stroke-width="2.415"/></g><g transform="translate(839.9 603.8)"><path d="M3.4 0 C0.2 2.4 -0.8 7 1.2 10 C2.4 11.6 4.6 12.2 6.6 11.6 C7.6 8.6 7.4 3.4 3.4 0 Z" fill="#000"/><path d="M12 0 C15.2 2.4 16.2 7 14.2 10 C13 11.6 10.8 12.2 8.8 11.6 C7.8 8.6 8 3.4 12 0 Z" fill="#000"/><path d="M6.4 9 H9 L11.6 21 H3.8 Z" fill="#000"/><path d="M7.7 12.4 L9.2 19.4 H6.2 Z" fill="#fff"/></g><g transform="translate(894 612.2)"><path d="M-6.5 -2.6 V3 A6.5 3.8 0 0 0 6.5 3 V-2.6" fill="#fff" stroke="#000" stroke-width="1.9"/><ellipse cx="0" cy="-2.6" rx="6.5" ry="4" fill="#e8e8e8" stroke="#000" stroke-width="1.9"/><path d="M-4.2 -2 L-1.2 -4.2 M1.2 -1.4 L4.2 -3.6 M-1.8 -1 L1.8 -4.6" stroke-width="1.8" stroke="#1a1a1a" fill="none"/></g><path d="M1141.2 504.6 H1219.1 A33.5 33.5 0 0 1 1252.6 538.1 V597.7 A33.5 33.5 0 0 1 1219.1 631.2 H1174.7 A33.5 33.5 0 0 1 1141.2 597.7 Z" fill="#fff" stroke="#111" stroke-width="2.2"/><circle cx="1195.7" cy="564.4" r="25.8" fill="#fff" stroke="#f0bc00" stroke-width="5.8"/><g transform="translate(1195.7 564.4) scale(1.0)" fill="none" stroke="#7e7e7e" stroke-linecap="round"><circle cx="0" cy="-3.6" r="3" fill="#7e7e7e" stroke="none"/><path d="M0 -3 V6.4" stroke-width="2.7" stroke-linecap="butt"/><path d="M0 5.6 L-6.4 16.4 H6.4 Z" stroke-width="1.5" stroke-linejoin="miter"/><path d="M-5.2 -7.9 A6 6 0 0 0 -5.2 1.4 M5.2 -7.9 A6 6 0 0 1 5.2 1.4" stroke-width="2.1"/><path d="M-8.9 -11.4 A12.1 12.1 0 0 0 -8.9 5 M8.9 -11.4 A12.1 12.1 0 0 1 8.9 5" stroke-width="2.1"/></g><g transform="translate(1155.2 593)"><path d="M3.4 0 C0.2 2.4 -0.8 7 1.2 10 C2.4 11.6 4.6 12.2 6.6 11.6 C7.6 8.6 7.4 3.4 3.4 0 Z" fill="#000"/><path d="M12 0 C15.2 2.4 16.2 7 14.2 10 C13 11.6 10.8 12.2 8.8 11.6 C7.8 8.6 8 3.4 12 0 Z" fill="#000"/><path d="M6.4 9 H9 L11.6 21 H3.8 Z" fill="#000"/><path d="M7.7 12.4 L9.2 19.4 H6.2 Z" fill="#fff"/></g><g transform="translate(1224.5 600.8)"><path d="M-6.5 -2.6 V3 A6.5 3.8 0 0 0 6.5 3 V-2.6" fill="#fff" stroke="#000" stroke-width="1.9"/><ellipse cx="0" cy="-2.6" rx="6.5" ry="4" fill="#e8e8e8" stroke="#000" stroke-width="1.9"/><path d="M-4.2 -2 L-1.2 -4.2 M1.2 -1.4 L4.2 -3.6 M-1.8 -1 L1.8 -4.6" stroke-width="1.8" stroke="#1a1a1a" fill="none"/></g><path d="M1017.4 679 H1095.5 A33.5 33.5 0 0 1 1129 712.5 V771.7 A33.5 33.5 0 0 1 1095.5 805.2 H1050.9 A33.5 33.5 0 0 1 1017.4 771.7 Z" fill="#fff" stroke="#111" stroke-width="2.2"/><circle cx="1077.9" cy="740.1" r="25.8" fill="#fff" stroke="#f0bc00" stroke-width="5.8"/><g transform="translate(1077.9 740.1) scale(1.0)" fill="none" stroke="#7e7e7e" stroke-linecap="round"><circle cx="0" cy="-3.6" r="3" fill="#7e7e7e" stroke="none"/><path d="M0 -3 V6.4" stroke-width="2.7" stroke-linecap="butt"/><path d="M0 5.6 L-6.4 16.4 H6.4 Z" stroke-width="1.5" stroke-linejoin="miter"/><path d="M-5.2 -7.9 A6 6 0 0 0 -5.2 1.4 M5.2 -7.9 A6 6 0 0 1 5.2 1.4" stroke-width="2.1"/><path d="M-8.9 -11.4 A12.1 12.1 0 0 0 -8.9 5 M8.9 -11.4 A12.1 12.1 0 0 1 8.9 5" stroke-width="2.1"/></g><g transform="translate(1031.4 767)"><path d="M3.4 0 C0.2 2.4 -0.8 7 1.2 10 C2.4 11.6 4.6 12.2 6.6 11.6 C7.6 8.6 7.4 3.4 3.4 0 Z" fill="#000"/><path d="M12 0 C15.2 2.4 16.2 7 14.2 10 C13 11.6 10.8 12.2 8.8 11.6 C7.8 8.6 8 3.4 12 0 Z" fill="#000"/><path d="M6.4 9 H9 L11.6 21 H3.8 Z" fill="#000"/><path d="M7.7 12.4 L9.2 19.4 H6.2 Z" fill="#fff"/></g><g transform="translate(1101 774.8)"><path d="M-6.5 -2.6 V3 A6.5 3.8 0 0 0 6.5 3 V-2.6" fill="#fff" stroke="#000" stroke-width="1.9"/><ellipse cx="0" cy="-2.6" rx="6.5" ry="4" fill="#e8e8e8" stroke="#000" stroke-width="1.9"/><path d="M-4.2 -2 L-1.2 -4.2 M1.2 -1.4 L4.2 -3.6 M-1.8 -1 L1.8 -4.6" stroke-width="1.8" stroke="#1a1a1a" fill="none"/></g><path d="M912.6 889.4 H990.7 A33.5 33.5 0 0 1 1024.2 922.9 V981.7 A33.5 33.5 0 0 1 990.7 1015.2 H946.1 A33.5 33.5 0 0 1 912.6 981.7 Z" fill="#fff" stroke="#111" stroke-width="2.2"/><circle cx="969.4" cy="950.3" r="25.8" fill="#fff" stroke="#c5e1af" stroke-width="5.8"/><g transform="translate(969.4 950.3)" fill="none" stroke="#858585" stroke-width="1.5"><rect x="-14.3" y="-14.9" width="28.6" height="29.8" rx="1.4" stroke-width="1.9"/><circle cx="0" cy="0" r="2.5" fill="#858585" stroke="none"/><path d="M5.20 0.00 L9.60 0.00"/><path d="M8.20 2.60 L12.20 0.00 L8.20 -2.60 Z" fill="#858585" stroke="none"/><path d="M3.96 3.96 L7.07 7.07"/><circle cx="7.35" cy="7.35" r="1.9" fill="#858585" stroke="none"/><path d="M0.00 5.20 L0.00 9.60"/><path d="M-2.60 8.20 L0.00 12.20 L2.60 8.20 Z" fill="#858585" stroke="none"/><path d="M-3.96 3.96 L-7.07 7.07"/><circle cx="-7.35" cy="7.35" r="1.9" fill="#858585" stroke="none"/><path d="M-5.20 0.00 L-9.60 0.00"/><path d="M-8.20 -2.60 L-12.20 0.00 L-8.20 2.60 Z" fill="#858585" stroke="none"/><path d="M-3.96 -3.96 L-7.07 -7.07"/><circle cx="-7.35" cy="-7.35" r="1.9" fill="#858585" stroke="none"/><path d="M-0.00 -5.20 L-0.00 -9.60"/><path d="M2.60 -8.20 L-0.00 -12.20 L-2.60 -8.20 Z" fill="#858585" stroke="none"/><path d="M3.96 -3.96 L7.07 -7.07"/><circle cx="7.35" cy="-7.35" r="1.9" fill="#858585" stroke="none"/></g><g transform="translate(925 985.3)"><path d="M3.4 0 C0.2 2.4 -0.8 7 1.2 10 C2.4 11.6 4.6 12.2 6.6 11.6 C7.6 8.6 7.4 3.4 3.4 0 Z" fill="#000"/><path d="M12 0 C15.2 2.4 16.2 7 14.2 10 C13 11.6 10.8 12.2 8.8 11.6 C7.8 8.6 8 3.4 12 0 Z" fill="#000"/><path d="M6.4 9 H9 L11.6 21 H3.8 Z" fill="#000"/><path d="M7.7 12.4 L9.2 19.4 H6.2 Z" fill="#fff"/></g><g transform="translate(1000.7 994.5)"><path d="M-6.5 -2.6 V3 A6.5 3.8 0 0 0 6.5 3 V-2.6" fill="#fff" stroke="#000" stroke-width="1.9"/><ellipse cx="0" cy="-2.6" rx="6.5" ry="4" fill="#e8e8e8" stroke="#000" stroke-width="1.9"/><path d="M-4.2 -2 L-1.2 -4.2 M1.2 -1.4 L4.2 -3.6 M-1.8 -1 L1.8 -4.6" stroke-width="1.8" stroke="#1a1a1a" fill="none"/></g><path d="M1141.2 893.4 H1219.1 A33.5 33.5 0 0 1 1252.6 926.9 V985.9 A33.5 33.5 0 0 1 1219.1 1019.4 H1174.7 A33.5 33.5 0 0 1 1141.2 985.9 Z" fill="#fff" stroke="#111" stroke-width="2.2"/><circle cx="1203.7" cy="959.1" r="25.8" fill="#fff" stroke="#c5e1af" stroke-width="5.8"/><g transform="translate(1203.7 959.1) scale(1.0)" fill="none" stroke="#7e7e7e" stroke-linecap="round"><circle cx="0" cy="-3.6" r="3" fill="#7e7e7e" stroke="none"/><path d="M0 -3 V6.4" stroke-width="2.7" stroke-linecap="butt"/><path d="M0 5.6 L-6.4 16.4 H6.4 Z" stroke-width="1.5" stroke-linejoin="miter"/><path d="M-5.2 -7.9 A6 6 0 0 0 -5.2 1.4 M5.2 -7.9 A6 6 0 0 1 5.2 1.4" stroke-width="2.1"/><path d="M-8.9 -11.4 A12.1 12.1 0 0 0 -8.9 5 M8.9 -11.4 A12.1 12.1 0 0 1 8.9 5" stroke-width="2.1"/></g><g transform="translate(1177.2 991.4)"><path d="M3.4 0 C0.2 2.4 -0.8 7 1.2 10 C2.4 11.6 4.6 12.2 6.6 11.6 C7.6 8.6 7.4 3.4 3.4 0 Z" fill="#000"/><path d="M12 0 C15.2 2.4 16.2 7 14.2 10 C13 11.6 10.8 12.2 8.8 11.6 C7.8 8.6 8 3.4 12 0 Z" fill="#000"/><path d="M6.4 9 H9 L11.6 21 H3.8 Z" fill="#000"/><path d="M7.7 12.4 L9.2 19.4 H6.2 Z" fill="#fff"/></g><g transform="translate(1221.3 1004.8)"><path d="M-6.5 -2.6 V3 A6.5 3.8 0 0 0 6.5 3 V-2.6" fill="#fff" stroke="#000" stroke-width="1.9"/><ellipse cx="0" cy="-2.6" rx="6.5" ry="4" fill="#e8e8e8" stroke="#000" stroke-width="1.9"/><path d="M-4.2 -2 L-1.2 -4.2 M1.2 -1.4 L4.2 -3.6 M-1.8 -1 L1.8 -4.6" stroke-width="1.8" stroke="#1a1a1a" fill="none"/></g><path d="M1181 503.5 H1214" fill="none" stroke="#0c0c0c" stroke-width="1.2"/></g>
<text x="1082.8" y="949.4" text-anchor="middle" font-family="Liberation Sans, sans-serif" font-size="10.5" fill="#2a2a2a">10G</text>
<text x="1082.8" y="964" text-anchor="middle" font-family="Liberation Sans, sans-serif" font-size="10.5" fill="#2a2a2a">Fibre</text>
</svg>
<div id="dd" class="abs"><div class="it" style="top:6.5px;letter-spacing:0.1px">All</div><div class="it" style="top:64.7px;letter-spacing:0.27px">ASA Favorite Interfaces</div><div class="it" style="top:100.3px;letter-spacing:0.03px">ASA Firewalls</div><div class="it" style="top:136.3px;letter-spacing:0.7px">Groups</div><div class="it" style="top:172.1px;letter-spacing:0.37px">Hardware Categories (Node)</div><div class="it" style="top:208px;letter-spacing:0.4px">Hardware Sensors (Node)</div><div class="it" style="top:243.9px;letter-spacing:0.42px">Interfaces</div><div class="it sel" style="top:278.6px;letter-spacing:0.8px">Maps</div><div class="it" style="top:315.5px;letter-spacing:0.33px">NPM NetPath Endpoint Services</div><div class="track"></div><svg class="abs" style="left:-3px;top:-3px;overflow:visible" width="277" height="361" viewBox="15 136.5 277 361"><rect x="17.25" y="138.75" width="272.4" height="356.1" rx=".4" fill="none" stroke="#435b72" stroke-width="1.8"/><path d="M18 192.2 H267" stroke="#d9d9d9" stroke-width="1.1"/><rect x="271.4" y="173.9" width="13" height="188.4" rx="6.5" fill="#8b8b8b"/><path d="M277.9 152.9 L283.9 161.3 H271.9 Z" fill="#8b8b8b" stroke="#8b8b8b" stroke-width="3" stroke-linejoin="round"/><path d="M277.8 482.3 L283.9 473.6 H271.7 Z" fill="#8b8b8b" stroke="#8b8b8b" stroke-width="3" stroke-linejoin="round"/></svg></div>
<div id="frame-top" class="abs"><i></i></div>
<div id="frame-left" class="abs"><i></i></div>
<div id="frame-bottom" class="abs"></div>
</body></html>
